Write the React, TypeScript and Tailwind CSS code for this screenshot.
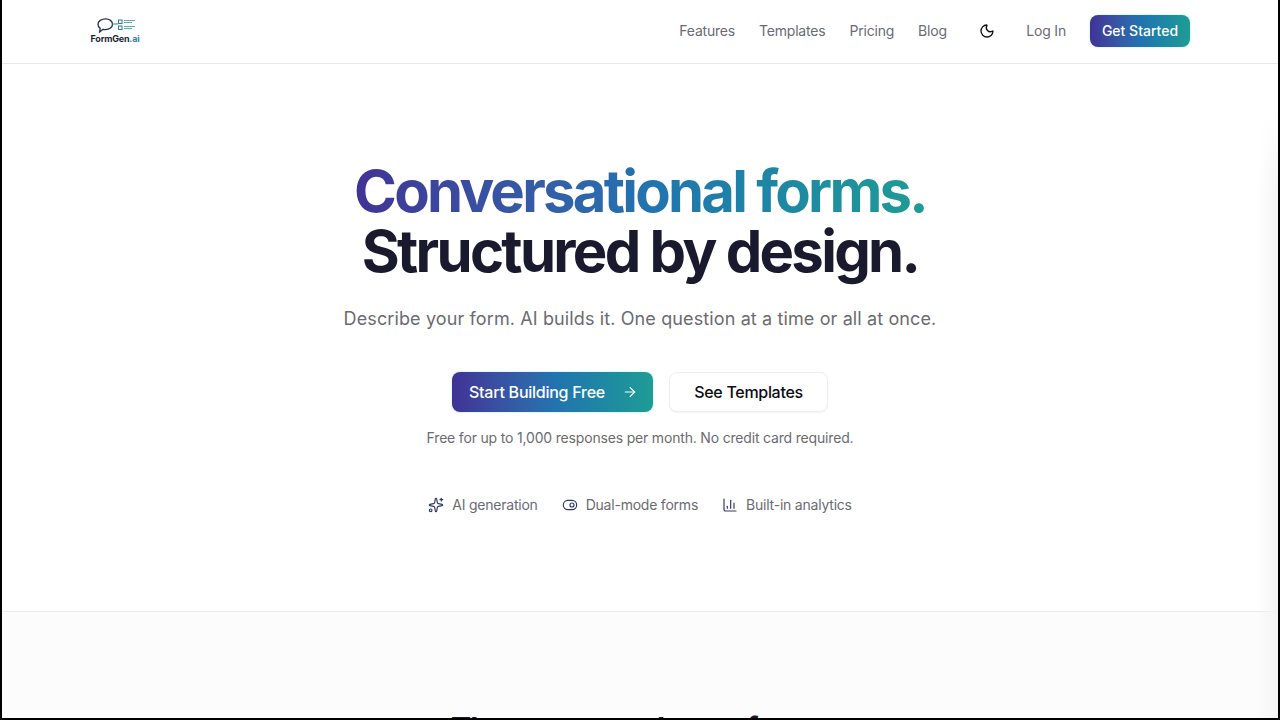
import { ArrowRight, ChartColumn, Moon, Sparkles, ToggleRight } from 'lucide-react';

const FONT = "font-['Inter',sans-serif]";
const BRAND = 'bg-gradient-to-r from-[#3f3296] via-[#2272b0] to-[#1f9c94]';

const Logo = () => (
  <div className="flex w-[50px] flex-col items-center">
    <svg width="40" height="15" viewBox="0 0 40 15" fill="none" className="ml-[4px]">
      <path
        d="M8.500 .8c4 0 7 2.400 7 5.400s-3 5.400-7 5.400c-.9 0-1.700-.1-2.400-.3L2.600 14l.6-3.600C1.800 9.400 1 7.900 1 6.200 1 3.200 4.500 .8 8.500 .8z"
        stroke="#24304f"
        strokeWidth="1.300"
      />
      <path d="M15 6h6" stroke="#2a8c97" strokeWidth="1" />
      <rect x="21.500" y="2" width="3.500" height="3.500" stroke="#2a7f8f" strokeWidth="1" />
      <rect x="21.500" y="8" width="3.500" height="3.500" stroke="#2a7f8f" strokeWidth="1" />
      <path d="M27 2.500h11M27 4.500h8M27 8.500h11M27 10.500h8" stroke="#5ab3b0" strokeWidth="1" />
    </svg>
    <span className="mt-[1px] text-[9px] leading-[10px] font-bold tracking-[-0.2px] text-[#1b1f33]">
      FormGen<span className="text-[#3a7fa0]">.ai</span>
    </span>
  </div>
);

const Header = () => (
  <header className="flex h-16 items-center justify-between border-b border-[#e8e8ea] px-[88px] pb-px">
    <Logo />
    <nav className="flex items-center text-sm tracking-[-0.2px] text-[#6b6b72]">
      <a className="mr-6">Features</a>
      <a className="mr-6">Templates</a>
      <a className="mr-6">Pricing</a>
      <a>Blog</a>
      <Moon className="mr-[31.5px] ml-[32px] size-4 text-[#111118]" strokeWidth={2} />
      <a className="mr-6">Log In</a>
      <a className={`flex h-8 w-[100px] items-center justify-center rounded-lg font-medium tracking-normal text-white shadow-[0_0_2px_rgba(60,220,220,0.5)] ${BRAND}`}>
        Get Started
      </a>
    </nav>
  </header>
);

const Feature = ({ icon, label }: { icon: React.ReactNode; label: string }) => (
  <div className="flex items-center gap-2">
    {icon}
    <span>{label}</span>
  </div>
);

const Hero = () => (
  <section className="flex h-[548px] flex-col items-center border-b border-[#ececee] pt-[97px]">
    <h1 className="text-center text-[58px] leading-[60px] font-bold tracking-[-2.75px]">
      <span className="bg-gradient-to-r from-[#3f3296] via-[#2272b0] to-[#1f9c94] bg-clip-text text-transparent">
        Conversational forms.
      </span>
      <br />
      <span className="tracking-[-2.7px] text-[#1a1a2e]">Structured by design.</span>
    </h1>
    <p className="mt-6 text-lg leading-7 tracking-[0.12px] text-[#6b6b72]">
      Describe your form. AI builds it. One question at a time or all at once.
    </p>
    <div className="mt-[39px] flex gap-4">
      <a className={`flex h-10 w-[201px] items-center justify-center gap-[17px] rounded-lg pl-[2px] font-medium tracking-[-0.25px] text-white shadow-[0_0_2px_rgba(60,220,220,0.5)] ${BRAND}`}>
        Start Building Free
        <ArrowRight className="size-4" strokeWidth={1.75} />
      </a>
      <a className="flex h-10 w-[159px] items-center justify-center rounded-lg border border-[#eeeeef] bg-white font-medium tracking-[-0.3px] text-[#0c0c14] shadow-xs">
        See Templates
      </a>
    </div>
    <p className="mt-4 text-sm tracking-[-0.18px] text-[#6b6b72]">
      Free for up to 1,000 responses per month. No credit card required.
    </p>
    <div className="mt-[47px] flex gap-6 text-sm tracking-[-0.22px] text-[#6b6b72]">
      <Feature icon={<Sparkles className="size-4 text-[#2f3a6b]" strokeWidth={1.75} />} label="AI generation" />
      <Feature icon={<ToggleRight className="size-4 text-[#2f3a6b]" strokeWidth={1.75} />} label="Dual-mode forms" />
      <Feature icon={<ChartColumn className="size-4 text-[#2f3a6b]" strokeWidth={1.75} />} label="Built-in analytics" />
    </div>
  </section>
);

export default function App() {
  return (
    <div className={`h-[720px] overflow-hidden bg-black px-[2px] pb-[2px] ${FONT}`}>
      <div className="relative h-[718px] overflow-hidden bg-white">
        <Header />
        <Hero />
        <section className="flex h-[200px] justify-center bg-[#fcfcfc] pt-[98px]">
          <h2 className="text-3xl font-bold tracking-tight text-[#1a1a2e]">Three steps to better forms</h2>
        </section>
        {/* faint edge shadow down the right side */}
        <div className="absolute top-[110px] right-0 bottom-0 w-5 bg-gradient-to-r from-transparent to-[#f4f4f6] [mask-image:linear-gradient(to_bottom,transparent,black_80px)]" />
      </div>
    </div>
  );
}
